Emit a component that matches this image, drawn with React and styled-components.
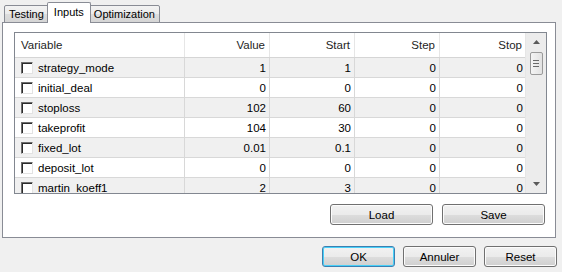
import React from 'react';
import styled, { createGlobalStyle } from 'styled-components';

const rows = [
  ['strategy_mode', '1', '1', '0', '0'],
  ['initial_deal', '0', '0', '0', '0'],
  ['stoploss', '102', '60', '0', '0'],
  ['takeprofit', '104', '30', '0', '0'],
  ['fixed_lot', '0.01', '0.1', '0', '0'],
  ['deposit_lot', '0', '0', '0', '0'],
  ['martin_koeff1', '2', '3', '0', '0'],
];

const cols = [170, 85, 85, 85, 86];

function App() {
  return (
    <Window>
      <GlobalStyle />
      <TabStrip>
        <Tab>Testing</Tab>
        <Tab selected>Inputs</Tab>
        <Tab>Optimization</Tab>
      </TabStrip>
      <Panel>
        <Grid>
          <GridMain>
            <HeaderRow>
              <HeadCell w={cols[0]} align="left">Variable</HeadCell>
              <HeadCell w={cols[1]}>Value</HeadCell>
              <HeadCell w={cols[2]}>Start</HeadCell>
              <HeadCell w={cols[3]}>Step</HeadCell>
              <HeadCell w={cols[4]} last>Stop</HeadCell>
            </HeaderRow>
            {rows.map((r, i) => (
              <Row key={r[0]} odd={i % 2 === 0}>
                <Cell w={cols[0]} align="left">
                  <Check />
                  {r[0]}
                </Cell>
                <Cell w={cols[1]}>{r[1]}</Cell>
                <Cell w={cols[2]}>{r[2]}</Cell>
                <Cell w={cols[3]}>{r[3]}</Cell>
                <Cell w={cols[4]} last>{r[4]}</Cell>
              </Row>
            ))}
          </GridMain>
          <ScrollBar>
            <Arrow>
              <svg width="7" height="4" viewBox="0 0 7 4">
                <path d="M0 4 L3.5 0 L7 4 Z" fill="#5a5a5a" />
              </svg>
            </Arrow>
            <Thumb>
              <Grip />
              <Grip />
              <Grip />
            </Thumb>
            <Track />
            <Arrow>
              <svg width="7" height="4" viewBox="0 0 7 4">
                <path d="M0 0 L3.5 4 L7 0 Z" fill="#5a5a5a" />
              </svg>
            </Arrow>
          </ScrollBar>
        </Grid>
        <ButtonRow>
          <Button w={103}>Load</Button>
          <Button w={103}>Save</Button>
        </ButtonRow>
      </Panel>
      <DialogButtons>
        <Button w={73} focused>OK</Button>
        <Button w={73}>Annuler</Button>
        <Button w={73}>Reset</Button>
      </DialogButtons>
    </Window>
  );
}

const GlobalStyle = createGlobalStyle`
  html, body {
    margin: 0;
    padding: 0;
    background: #f0f0f0;
  }
  body {
    font-family: "Liberation Sans", Arial, sans-serif;
    font-size: 11px;
    color: #000;
  }
`;

const Window = styled.div`
  width: 562px;
  height: 272px;
  display: flex;
  flex-direction: column;
  background: #f0f0f0;
  overflow: hidden;
`;

const TabStrip = styled.div`
  display: flex;
  align-items: flex-end;
  height: 23px;
  padding-left: 4px;
  position: relative;
  z-index: 1;
  margin-bottom: -1px;
`;

const Tab = styled.div`
  box-sizing: border-box;
  height: ${(p) => (p.selected ? '21px' : '18px')};
  padding: 0 ${(p) => (p.selected ? '6px' : '4px')};
  display: flex;
  align-items: center;
  font-size: 11px;
  border: 1px solid #898c95;
  border-bottom: ${(p) => (p.selected ? 'none' : '1px solid #898c95')};
  border-radius: 2px 2px 0 0;
  background: ${(p) =>
    p.selected
      ? '#ffffff'
      : 'linear-gradient(#f3f3f3 0%, #ebebeb 50%, #dddddd 51%, #d5d5d5 100%)'};
  position: relative;
  z-index: ${(p) => (p.selected ? 2 : 0)};
  padding-bottom: ${(p) => (p.selected ? '3px' : '0')};
  & + & {
    margin-left: -2px;
  }
`;

const Panel = styled.div`
  box-sizing: border-box;
  margin-left: 2px;
  width: 554px;
  height: 216px;
  border: 1px solid #898c95;
  background: #ffffff;
  padding: 9px 8px 0 11px;
  display: flex;
  flex-direction: column;
`;

const Grid = styled.div`
  box-sizing: border-box;
  width: 533px;
  height: 162px;
  border: 1px solid #828790;
  display: flex;
  background: #ffffff;
  overflow: hidden;
`;

const GridMain = styled.div`
  flex: 1;
  display: flex;
  flex-direction: column;
  overflow: hidden;
`;

const HeaderRow = styled.div`
  display: flex;
  flex: 0 0 24px;
  background: #ffffff;
  border-bottom: 1px solid #d5d5d5;
`;

const HeadCell = styled.div`
  box-sizing: border-box;
  width: ${(p) => p.w}px;
  flex: 0 0 ${(p) => p.w}px;
  display: flex;
  align-items: center;
  justify-content: ${(p) => (p.align === 'left' ? 'flex-start' : 'flex-end')};
  padding: ${(p) => (p.align === 'left' ? '0 0 0 6px' : '0 4px 0 0')};
  border-right: ${(p) => (p.last ? 'none' : '1px solid #e6e6e6')};
  color: #1e1e1e;
  font-size: 11.5px;
`;

const Row = styled.div`
  display: flex;
  flex: 0 0 20px;
  box-sizing: border-box;
  background: ${(p) => (p.odd ? '#f0f0f0' : '#ffffff')};
  border-bottom: 1px solid #d8d8d8;
`;

const Cell = styled.div`
  box-sizing: border-box;
  width: ${(p) => p.w}px;
  flex: 0 0 ${(p) => p.w}px;
  display: flex;
  align-items: center;
  justify-content: ${(p) => (p.align === 'left' ? 'flex-start' : 'flex-end')};
  padding: ${(p) => (p.align === 'left' ? '0 0 0 6px' : '0 3px 0 0')};
  border-right: ${(p) => (p.last ? 'none' : '1px solid #d8d8d8')};
  font-size: 11.5px;
`;

const Check = styled.span`
  box-sizing: border-box;
  width: 12px;
  height: 12px;
  margin-right: 5px;
  background: #ffffff;
  border-top: 1px solid #6e6e6e;
  border-left: 1px solid #6e6e6e;
  border-right: 1px solid #e2e2e2;
  border-bottom: 1px solid #e2e2e2;
  box-shadow: inset 1px 1px 0 #2a2a2a;
`;

const ScrollBar = styled.div`
  flex: 0 0 20px;
  display: flex;
  flex-direction: column;
  align-items: center;
  background: #ececec;
  border-left: 1px solid #e6e6e6;
`;

const Arrow = styled.div`
  flex: 0 0 18px;
  display: flex;
  align-items: center;
  justify-content: center;
`;

const Thumb = styled.div`
  box-sizing: border-box;
  width: 13px;
  height: 23px;
  margin-top: 1px;
  border: 1px solid #9a9a9a;
  border-radius: 2px;
  background: linear-gradient(90deg, #f4f4f4, #e2e2e2);
  display: flex;
  flex-direction: column;
  align-items: center;
  justify-content: center;
  gap: 2px;
`;

const Grip = styled.span`
  width: 6px;
  height: 1px;
  background: #6a6a6a;
`;

const Track = styled.div`
  flex: 1;
`;

const ButtonRow = styled.div`
  display: flex;
  justify-content: flex-end;
  gap: 9px;
  margin-top: 10px;
  padding-right: 2px;
`;

const Button = styled.div`
  box-sizing: border-box;
  width: ${(p) => p.w}px;
  height: 21px;
  display: flex;
  align-items: center;
  justify-content: center;
  font-size: 11.5px;
  border: 1px solid ${(p) => (p.focused ? '#3c7fb1' : '#707070')};
  border-radius: 3px;
  background: linear-gradient(#f2f2f2 0%, #ebebeb 50%, #dddddd 51%, #cfcfcf 100%);
  box-shadow: inset 0 0 0 1px ${(p) => (p.focused ? '#48d0f8' : '#fcfcfc')};
`;

const DialogButtons = styled.div`
  display: flex;
  justify-content: flex-end;
  gap: 8px;
  margin-top: 8px;
  padding-right: 5px;
`;

export default App;
